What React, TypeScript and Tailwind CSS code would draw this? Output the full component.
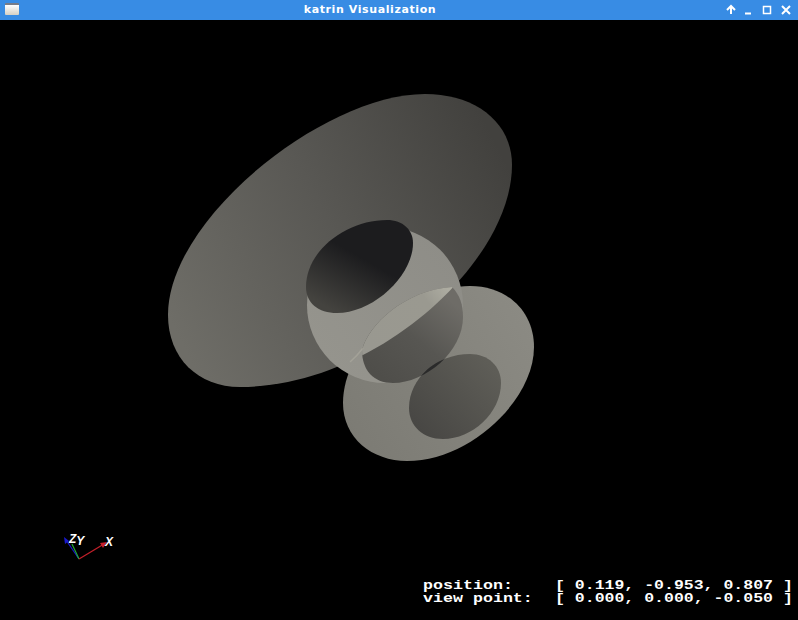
const bigDisc =
  "M425 94 C475 94 512 122 512 165 C512 262 375 387 240 387 C198 387 168 358 168 315 C168 218 325 94 425 94 Z";
const lowerDisc =
  "M470 286 C508 286 534 312 534 347 C534 400 470 461 407 461 C372 461 343 438 343 403 C343 345 410 286 470 286 Z";
const upperHole =
  "M387 220 C403 220 413 230 413 243 C413 276 373 313 337 313 C318 313 306 303 306 287 C306 250 347 220 387 220 Z";
const lowerHole =
  "M470 354 C488 354 501 366 501 383 C501 413 472 439 443 439 C423 439 409 426 409 408 C409 378 437 354 470 354 Z";
const lens =
  "M362 350 C368 325 405 290 452 287 C460 295 463 305 463 317 C463 352 425 383 393 383 C373 383 362 370 362 350 Z";

function Scene() {
  return (
    <svg width="798" height="600" viewBox="0 20 798 600" className="block">
      <defs>
        <linearGradient id="disc" x1="180" y1="340" x2="510" y2="170" gradientUnits="userSpaceOnUse">
          <stop offset="0" stopColor="#6e6d67" />
          <stop offset="0.5" stopColor="#595854" />
          <stop offset="1" stopColor="#42413e" />
        </linearGradient>
        <linearGradient id="lower" x1="350" y1="440" x2="530" y2="320" gradientUnits="userSpaceOnUse">
          <stop offset="0" stopColor="#7c7b74" />
          <stop offset="1" stopColor="#8b8a83" />
        </linearGradient>
        <linearGradient id="hole" x1="385" y1="225" x2="335" y2="312" gradientUnits="userSpaceOnUse">
          <stop offset="0.4" stopColor="#1c1c1e" />
          <stop offset="1" stopColor="#44433f" />
        </linearGradient>
        <linearGradient id="sphere" x1="320" y1="350" x2="450" y2="250" gradientUnits="userSpaceOnUse">
          <stop offset="0" stopColor="#95948d" />
          <stop offset="1" stopColor="#8e8d87" />
        </linearGradient>
        <linearGradient id="lensDark" x1="450" y1="300" x2="385" y2="380" gradientUnits="userSpaceOnUse">
          <stop offset="0" stopColor="#6e6c67" />
          <stop offset="0.5" stopColor="#575652" />
          <stop offset="1" stopColor="#4f4e4a" />
        </linearGradient>
        <linearGradient id="lensLight" x1="370" y1="350" x2="450" y2="290" gradientUnits="userSpaceOnUse">
          <stop offset="0" stopColor="#999890" />
          <stop offset="0.75" stopColor="#9a9990" />
          <stop offset="1" stopColor="#aeada2" />
        </linearGradient>
        <linearGradient id="lowerHoleFill" x1="420" y1="430" x2="490" y2="365" gradientUnits="userSpaceOnUse">
          <stop offset="0" stopColor="#484744" />
          <stop offset="1" stopColor="#5e5d57" />
        </linearGradient>
        <clipPath id="bigClip">
          <path d={bigDisc} />
        </clipPath>
        <clipPath id="lensClip">
          <path d={lens} />
        </clipPath>
      </defs>

      <path d={lowerDisc} fill="url(#lower)" />
      <path d={bigDisc} fill="url(#disc)" />
      <circle cx="385" cy="305" r="78" fill="url(#sphere)" />
      <path d={upperHole} fill="url(#hole)" />
      <path d={lowerHole} fill="url(#lowerHoleFill)" />

      <path d={lens} fill="url(#lensDark)" />
      <g clipPath="url(#bigClip)">
        <path d={lens} fill="url(#lensLight)" />
      </g>
      <g clipPath="url(#lensClip)">
        <path d={lowerHole} fill="#2a2a2a" />
      </g>

      <path d="M350 362 Q357 356 363 348" fill="none" stroke="#b5b3a7" strokeWidth="1.5" opacity="0.45" />
    </svg>
  );
}

function Axes() {
  return (
    <div className="absolute left-[60px] top-[510px] h-[36px] w-[60px]">
      <svg width="60" height="36" viewBox="60 530 60 36" className="block">
        <line x1="79" y1="559" x2="66" y2="540" stroke="#1a1acc" strokeWidth="1.2" />
        <polygon points="64,537 69,541 65,544" fill="#1a1acc" />
        <line x1="79" y1="559" x2="72" y2="544" stroke="#22aa33" strokeWidth="1.2" />
        <line x1="79" y1="559" x2="104" y2="544" stroke="#c5202a" strokeWidth="1.2" />
        <polygon points="107,542 100,543 103,548" fill="#c5202a" />
      </svg>
      <div className="absolute left-[9px] top-[3px] flex items-start font-['Liberation_Sans',sans-serif] text-[12px] leading-[12px] font-bold text-white italic">
        <span>Z</span>
        <span className="mt-[2px]">Y</span>
      </div>
      <span className="absolute left-[45px] top-[6px] font-['Liberation_Sans',sans-serif] text-[12px] leading-[12px] font-bold text-white italic">
        X
      </span>
    </div>
  );
}

function Readout() {
  return (
    <div className="absolute left-[423px] top-[559px] flex whitespace-pre font-['Liberation_Mono',monospace] text-[13px] leading-[13px] font-bold text-white">
      <div className="w-[132px] shrink-0 origin-top-left scale-x-[1.28]">
        <div>position:</div>
        <div>view point:</div>
      </div>
      <div className="origin-top-left scale-x-[1.27]">
        <div>[ 0.119, -0.953, 0.807 ]</div>
        <div>[ 0.000, 0.000, -0.050 ]</div>
      </div>
    </div>
  );
}

function TitleBar() {
  return (
    <div className="relative flex h-5 items-center justify-center bg-[#388ce4]">
      <div className="absolute left-[5px] top-[3px] h-[12px] w-[14px] rounded-[1px] border-t-2 border-t-[#777c88] bg-gradient-to-b from-white to-[#d5d0c4]" />
      <span className="ml-[-58px] font-['DejaVu_Sans',sans-serif] text-[11px] font-bold tracking-[0.6px] text-white">
        katrin Visualization
      </span>
      <div className="absolute right-[6px] top-[4px] flex items-center">
        <svg width="66" height="12" viewBox="0 0 66 12" className="block">
          <path d="M1 6 L5 2 L9 6 M5 2 V10" fill="none" stroke="white" strokeWidth="2" />
          <path d="M19 9.5 H25" stroke="white" strokeWidth="2" />
          <rect x="37.5" y="2.5" width="7" height="7" fill="none" stroke="white" strokeWidth="1.5" />
          <path d="M56 2 L64 10 M64 2 L56 10" stroke="white" strokeWidth="2" />
        </svg>
      </div>
    </div>
  );
}

export default function App() {
  return (
    <div className="flex h-[620px] w-[798px] flex-col overflow-hidden bg-black">
      <TitleBar />
      <div className="relative flex-1 bg-black">
        <Scene />
        <Axes />
        <Readout />
      </div>
    </div>
  );
}
